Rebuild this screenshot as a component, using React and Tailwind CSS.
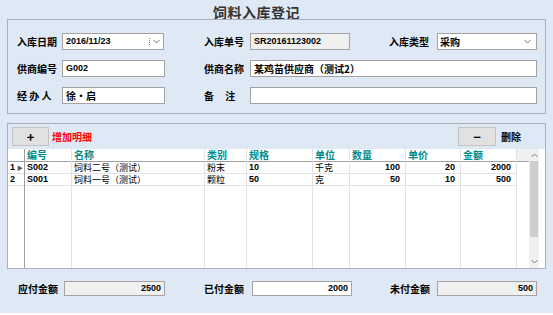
import React from 'react';

const cjk = { fontFamily: '"Noto Sans CJK SC", "Liberation Sans", sans-serif' };
const num = { fontFamily: '"Liberation Sans Narrow", "Liberation Sans", "Noto Sans CJK SC", sans-serif' };

const Chevron = ({ className }) => (
    <svg className={className} width="7" height="5" viewBox="0 0 7 5" fill="none">
        <path d="M0.5 1l3 3 3-3" stroke="#7a7a7a" strokeWidth="1" />
    </svg>
);

const Label = ({ children, w }) => (
    <span className="shrink-0 text-[10px] font-bold leading-none text-black" style={{ ...cjk, width: w }}>
        {children}
    </span>
);

const Box = ({ w, children, grey, right }) => (
    <div
        className={`h-full shrink-0 border border-[#a3a3a3] flex items-center px-[3px] text-[9px] font-bold leading-none text-black ${grey ? 'bg-[#f0f0f0]' : 'bg-white'} ${right ? 'justify-end' : ''}`}
        style={{ ...num, width: w }}>
        {children}
    </div>
);

const columns = [
    { h: '编号', w: 48, vals: ['S002', 'S001'] },
    { h: '名称', w: 134, vals: ['饲料二号（测试）', '饲料一号（测试）'] },
    { h: '类别', w: 43, vals: ['粉末', '颗粒'] },
    { h: '规格', w: 67, vals: ['10', '50'] },
    { h: '单位', w: 38, vals: ['千克', '克'] },
    { h: '数量', w: 57, vals: ['100', '50'], right: true },
    { h: '单价', w: 56, vals: ['20', '10'], right: true },
    { h: '金额', w: 57, vals: ['2000', '500'], right: true },
];

const isAscii = (v) => /^[A-Z0-9]/.test(v);

const DetailGrid = () => (
    <div className="flex-1 flex bg-white min-h-0">
        {/* row headers */}
        <div className="w-[17px] shrink-0 flex flex-col border-r border-[#a0a0a0]">
            <div className="h-[13px] border-b border-[#a0a0a0]" />
            {['1', '2'].map((n, i) => (
                <div key={n} className="h-[12px] border-b border-[#e3e3e3] flex items-center pl-[2px] text-[9px] font-bold leading-[9px]" style={num}>
                    {n}
                    {i === 0 ? <span className="ml-[2px] text-[6px] leading-[6px] text-[#555]">▶</span> : null}
                </div>
            ))}
        </div>

        {columns.map((c) => (
            <div key={c.h} className="shrink-0 flex flex-col border-r border-[#e3e3e3]" style={{ width: c.w - 1 }}>
                <div className="h-[13px] border-b border-[#a0a0a0] flex items-center pl-[2px] text-[10px] font-bold leading-[10px] text-[#008b8b]" style={cjk}>
                    {c.h}
                </div>
                {c.vals.map((v, i) => (
                    <div
                        key={i}
                        className={`h-[12px] border-b border-[#e3e3e3] flex items-center text-black ${c.right ? 'justify-end pr-[5px]' : 'pl-[2px]'}`}>
                        <span
                            className={`block ${isAscii(v) ? 'text-[9px] leading-[9px] font-bold' : 'text-[9px] leading-[9px]'}`}
                            style={isAscii(v) ? num : cjk}>
                            {v}
                        </span>
                    </div>
                ))}
            </div>
        ))}

        <div className="w-[12px] shrink-0 flex flex-col">
            <div className="h-[13px] bg-[#f0f0f0] border-b border-[#a0a0a0]" />
        </div>

        {/* scrollbar */}
        <div className="w-[10px] shrink-0 bg-[#f0f0f0] flex flex-col items-center">
            <svg className="mt-[4px]" width="7" height="5" viewBox="0 0 7 5" fill="none">
                <path d="M0.5 4l3-3 3 3" stroke="#7a7a7a" strokeWidth="1" />
            </svg>
            <div className="mt-[3px] w-[8px] h-[76px] bg-[#cdcdcd]" />
            <div className="flex-1" />
            <Chevron className="mb-[4px]" />
        </div>
    </div>
);

export default function App() {
    return (
        <div className="w-[553px] h-[315px] bg-[#dfe8f5] flex flex-col overflow-hidden" style={cjk}>
            <div className="h-[19px] pt-[5px] pl-[213px] text-[14px] leading-[14px] font-bold text-[#333] tracking-[0.5px]">
                饲料入库登记
            </div>

            {/* header info */}
            <div className="mx-[7px] h-[95px] border border-[#a8afb8] pt-[13px] pl-[9px] flex flex-col gap-[10px]">
                <div className="h-[17px] flex items-center">
                    <div className="w-[187px] h-full flex items-center">
                        <Label w={45}>入库日期</Label>
                        <div className="h-full w-[102px] border border-[#a3a3a3] bg-white flex items-center" style={num}>
                            <span className="flex-1 pl-[3px] text-[9px] font-bold leading-none">2016/11/23</span>
                            <span className="w-[1px] h-[7px] border-l border-dotted border-[#777] mr-[3px]" />
                            <Chevron className="mr-[3px]" />
                        </div>
                    </div>
                    <Label w={46}>入库单号</Label>
                    <Box w={100} grey>SR20161123002</Box>
                    <div className="w-[39px]" />
                    <Label w={48}>入库类型</Label>
                    <div className="h-full w-[100px] border border-[#a3a3a3] bg-white flex items-center pl-[2px] pr-[5px]">
                        <span className="flex-1 text-[10px] font-bold leading-none" style={cjk}>采购</span>
                        <Chevron />
                    </div>
                </div>

                <div className="h-[17px] flex items-center">
                    <div className="w-[187px] h-full flex items-center">
                        <Label w={45}>供商编号</Label>
                        <Box w={103}>G002</Box>
                    </div>
                    <Label w={46}>供商名称</Label>
                    <Box w={287}><span className="text-[10px]" style={cjk}>某鸡苗供应商（测试2）</span></Box>
                </div>

                <div className="h-[17px] flex items-center">
                    <div className="w-[187px] h-full flex items-center">
                        <Label w={45}>经&nbsp;办&nbsp;人</Label>
                        <Box w={103}><span className="text-[10px]" style={cjk}>徐•启</span></Box>
                    </div>
                    <Label w={46}>备&nbsp;&nbsp;&nbsp;&nbsp;&nbsp;注</Label>
                    <Box w={287} />
                </div>
            </div>

            {/* details */}
            <div className="mx-[7px] mt-[9px] h-[146px] border border-[#a8afb8] flex flex-col">
                <div className="h-[19px] mt-[3px] flex items-center pl-[4px]">
                    <button className="w-[37px] h-full bg-[#e1e1e1] border border-[#c4c4c4] flex items-center justify-center text-[13px] font-bold leading-none text-black">
                        +
                    </button>
                    <span className="ml-[3px] text-[10px] font-bold leading-none text-[#ff0000]">增加明细</span>
                    <div className="flex-1" />
                    <button className="w-[38px] h-full bg-[#e1e1e1] border border-[#c4c4c4] flex items-center justify-center text-[13px] font-bold leading-none text-black">
                        −
                    </button>
                    <span className="ml-[5px] w-[20px] mr-[24px] text-[10px] font-bold leading-none text-black">删除</span>
                </div>
                <div className="mt-[3px] flex-1 flex min-h-0">
                    <DetailGrid />
                </div>
            </div>

            {/* totals */}
            <div className="mt-[12px] h-[15px] pl-[18px] flex items-center">
                <div className="w-[186px] h-full flex items-center">
                    <Label w={46}>应付金额</Label>
                    <Box w={101} grey right>2500</Box>
                </div>
                <div className="w-[186px] h-full flex items-center">
                    <Label w={48}>已付金额</Label>
                    <Box w={100} right>2000</Box>
                </div>
                <Label w={47}>未付金额</Label>
                <Box w={100} grey right>500</Box>
            </div>
            <div className="flex-1" />
            <div className="h-[2px] bg-white" />
        </div>
    );
}
